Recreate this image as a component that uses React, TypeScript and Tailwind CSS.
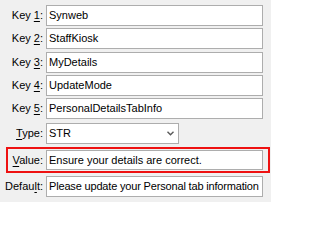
const font = { fontFamily: '"Liberation Sans", Arial, sans-serif' }

function Label({ pre, hot, post, w = "w-[46px]" }: { pre: string; hot: string; post: string; w?: string }) {
  return (
    <div className={`${w} shrink-0 pr-[3px] text-right text-[11px] leading-none text-black`}>
      {pre}
      <span className="underline underline-offset-[2px]">{hot}</span>
      {post}
    </div>
  )
}

function Field({ value, h = "h-[21px]", tight = false }: { value: string; h?: string; tight?: boolean }) {
  return (
    <div
      className={`${h} w-[217px] shrink-0 overflow-hidden whitespace-nowrap border border-[#adadad] bg-white pl-[2px] text-[11px] leading-none text-black flex items-center ${tight ? "tracking-[-0.17px]" : ""}`}
    >
      {value}
    </div>
  )
}

export default function App() {
  const keys = [
    { n: "1", v: "Synweb", mt: "mt-0" },
    { n: "2", v: "StaffKiosk", mt: "mt-[2px]" },
    { n: "3", v: "MyDetails", mt: "mt-[3px]" },
    { n: "4", v: "UpdateMode", mt: "mt-[2px]" },
    { n: "5", v: "PersonalDetailsTabInfo", mt: "mt-[2px]" },
  ]
  return (
    <div className="w-[271px] h-[202px] overflow-hidden bg-[#f0f0f0] pt-[5px]" style={font}>
      {keys.map((k) => (
        <div key={k.n} className={`flex items-center ${k.mt}`}>
          <Label pre="Key " hot={k.n} post=":" />
          <Field value={k.v} />
        </div>
      ))}

      {/* Type */}
      <div className="flex items-center mt-[4px]">
        <Label pre="" hot="T" post="ype:" />
        <div className="h-[21px] w-[133px] border border-[#adadad] bg-white pl-[2px] flex items-center justify-between text-[11px] leading-none text-black">
          <span>STR</span>
          <svg width="7" height="5" viewBox="0 0 7 5" className="mr-[4px]">
            <path d="M0.5 0.8 L3.5 3.8 L6.5 0.8" fill="none" stroke="#5a5a5a" strokeWidth="1.4" />
          </svg>
        </div>
      </div>

      {/* Value (highlighted) */}
      <div className="mt-[3px] ml-[6px] w-[264px] h-[26px] border-2 border-[#ee1111] flex items-center">
        <Label pre="" hot="V" post="alue:" w="w-[38px]" />
        <Field value="Ensure your details are correct." h="h-[20px]" />
      </div>

      {/* Default */}
      <div className="flex items-center mt-[3px]">
        <Label pre="Defau" hot="l" post="t:" />
        <Field value="Please update your Personal tab information" tight />
      </div>
    </div>
  )
}
